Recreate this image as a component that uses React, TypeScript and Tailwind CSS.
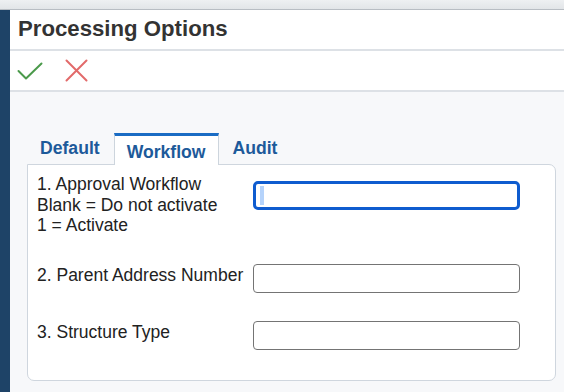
import React from "react";

const font = { fontFamily: '"Liberation Sans", Arial, sans-serif' };

function Tab({ label, active }: { label: string; active?: boolean }) {
  if (active) {
    return (
      <div className="relative z-10 -mb-px flex h-[32px] items-start border-x border-t-[3px] border-x-[#cdd5dd] border-t-[#1a6cc4] bg-white px-[12px] pt-[6px]">
        <span className="text-[17.6px] font-bold leading-[20px] text-[#1d5a9a]">{label}</span>
      </div>
    );
  }
  return (
    <div className="flex h-[32px] items-start px-[12px] pt-[6px]">
      <span className="text-[17.6px] font-bold leading-[20px] text-[#1d5a9a]">{label}</span>
    </div>
  );
}

export default function App() {
  return (
    <div className="flex h-[392px] w-[564px] flex-col overflow-hidden bg-[#f7f8fa] text-[#333]" style={font}>
      {/* top strip */}
      <div className="h-[10px] shrink-0 border-b border-[#b8bdc3] bg-gradient-to-b from-[#eef0f2] to-[#e2e5e8]" />
      <div className="flex flex-1">
        <div className="w-[10px] shrink-0 bg-[#1e4367]" />
        <div className="flex flex-1 flex-col">
          <div className="flex h-[41px] items-center border-b-2 border-[#dde1e6] bg-white pl-[8px]">
            <h1 className="text-[22.2px] font-bold leading-none text-[#333]">Processing Options</h1>
          </div>
          <div className="flex h-[41px] items-center gap-[22px] border-b-2 border-[#dde1e6] bg-white pl-[7px]">
            <svg width="26" height="20" viewBox="0 0 26 20" fill="none">
              <path d="M1.5 10 L9 17.5 L24.5 2.5" stroke="#4b9a4b" strokeWidth="2" strokeLinecap="round" strokeLinejoin="round" />
            </svg>
            <svg width="23" height="23" viewBox="0 0 23 23" fill="none">
              <path d="M1.5 1.5 L21.5 21.5 M21.5 1.5 L1.5 21.5" stroke="#e26a6a" strokeWidth="2" strokeLinecap="round" />
            </svg>
          </div>
          <div className="flex flex-1 flex-col pl-[17px] pr-[8px] pt-[40px]">
            <div className="flex items-end gap-[2px] pl-[1px]">
              <Tab label="Default" />
              <Tab label="Workflow" active />
              <Tab label="Audit" />
            </div>
            <div className="flex h-[217px] flex-col rounded-b-[7px] rounded-tr-[7px] border border-[#cfd6de] bg-white pl-[9px] pt-[9px]">
              <div className="flex h-[90px] items-start">
                <div className="w-[216px] text-[17.5px] leading-[20.5px] text-[#222]">
                  <div>1. Approval Workflow</div>
                  <div>Blank = Do not activate</div>
                  <div>1 = Activate</div>
                </div>
                <div className="mt-[7px] flex h-[29px] w-[267px] items-center rounded-[5px] border-[3px] border-[#0f5ccf] pl-[4px]">
                  <div className="h-[19px] w-[4px] bg-[#b5d3fb]" />
                </div>
              </div>
              <div className="flex h-[57px] items-start">
                <div className="w-[216px] pt-[1px] text-[17.5px] leading-[20px] text-[#222]">2. Parent Address Number</div>
                <div className="h-[29px] w-[267px] rounded-[4px] border border-[#747474]" />
              </div>
              <div className="flex items-start">
                <div className="w-[216px] pt-[1px] text-[17.5px] leading-[20px] text-[#222]">3. Structure Type</div>
                <div className="h-[29px] w-[267px] rounded-[4px] border border-[#747474]" />
              </div>
            </div>
          </div>
        </div>
      </div>
    </div>
  );
}
